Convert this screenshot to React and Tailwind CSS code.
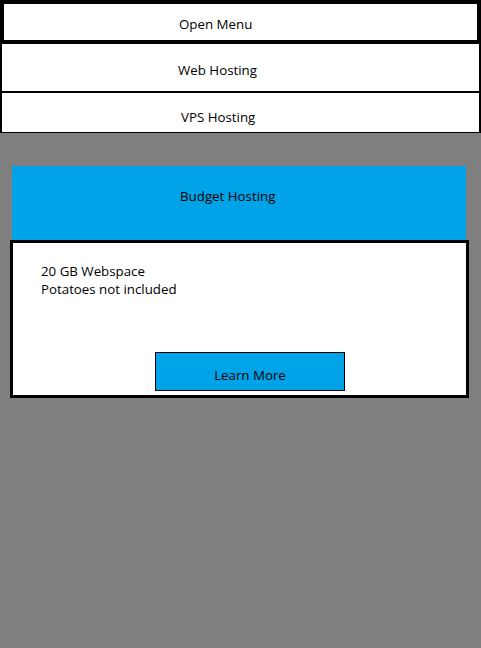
export default function App() {
  const font = { fontFamily: '"Open Sans", "Noto Sans", Arial, sans-serif' };
  return (
    <div className="min-h-screen w-full bg-[#7f7f7f] text-[13.3px] leading-[18px] text-black" style={font}>
      <div className="h-[44px] w-[481px] border-4 border-black bg-white pl-[175px] pt-[11px]">Open Menu</div>
      <div className="h-[49px] w-[481px] border-x-2 border-b-2 border-black bg-white pl-[176px] pt-[17px]">Web Hosting</div>
      <div className="h-[40px] w-[481px] border-x-2 border-b border-black bg-white pl-[179px] pt-[15px]">VPS Hosting</div>
      <div className="pt-[33px]">
        <div className="ml-[12px] h-[74px] w-[454px] bg-[#00a2e8] pl-[168px] pt-[21px]">Budget Hosting</div>
        <div className="ml-[10px] h-[158px] w-[459px] border-[3px] border-black bg-white pl-[28px] pt-[19px]">
          <div>20 GB Webspace</div>
          <div>Potatoes not included</div>
          <div className="ml-[114px] mt-[54px] flex h-[39px] w-[190px] justify-center border border-black bg-[#00a2e8] pt-[13px]">
            Learn More
          </div>
        </div>
      </div>
    </div>
  );
}
